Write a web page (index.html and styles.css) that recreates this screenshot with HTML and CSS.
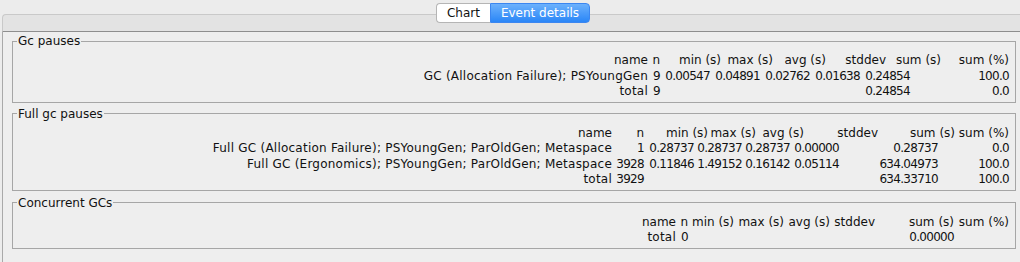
FILE: index.html
```html
<!DOCTYPE html>
<html>
<head>
    <meta charset="UTF-8">
    <title>Event details</title>
    <link rel="stylesheet" href="styles.css">
</head>
<body>
    <div class="tab-bar">
        <div class="tab-band"></div>
        <div class="segmented">
            <span class="seg">Chart</span>
            <span class="seg active">Event details</span>
        </div>
    </div>

    <div class="pane">
        <fieldset class="group gc">
            <legend>Gc pauses</legend>
            <div class="stats">
                <div class="row head">
                    <span>name</span><span>n</span><span>min (s)</span><span>max (s)</span><span>avg (s)</span><span>stddev</span><span>sum (s)</span><span>sum (%)</span>
                </div>
                <div class="row data">
                    <span>GC (Allocation Failure); PSYoungGen</span><span>9</span><span>0.00547</span><span>0.04891</span><span>0.02762</span><span>0.01638</span><span>0.24854</span><span>100.0</span>
                </div>
                <div class="row data">
                    <span>total</span><span>9</span><span></span><span></span><span></span><span></span><span>0.24854</span><span>0.0</span>
                </div>
            </div>
        </fieldset>

        <fieldset class="group full">
            <legend>Full gc pauses</legend>
            <div class="stats">
                <div class="row head">
                    <span>name</span><span>n</span><span>min (s)</span><span>max (s)</span><span>avg (s)</span><span>stddev</span><span>sum (s)</span><span>sum (%)</span>
                </div>
                <div class="row data">
                    <span>Full GC (Allocation Failure); PSYoungGen; ParOldGen; Metaspace</span><span>1</span><span>0.28737</span><span>0.28737</span><span>0.28737</span><span>0.00000</span><span>0.28737</span><span>0.0</span>
                </div>
                <div class="row data">
                    <span>Full GC (Ergonomics); PSYoungGen; ParOldGen; Metaspace</span><span>3928</span><span>0.11846</span><span>1.49152</span><span>0.16142</span><span>0.05114</span><span>634.04973</span><span>100.0</span>
                </div>
                <div class="row data">
                    <span>total</span><span>3929</span><span></span><span></span><span></span><span></span><span>634.33710</span><span>100.0</span>
                </div>
            </div>
        </fieldset>

        <fieldset class="group concurrent">
            <legend>Concurrent GCs</legend>
            <div class="stats">
                <div class="row head">
                    <span>name</span><span>n</span><span>min (s)</span><span>max (s)</span><span>avg (s)</span><span>stddev</span><span>sum (s)</span><span>sum (%)</span>
                </div>
                <div class="row data">
                    <span>total</span><span>0</span><span></span><span></span><span></span><span></span><span>0.00000</span><span></span>
                </div>
            </div>
        </fieldset>
    </div>
</body>
</html>
```

FILE: styles.css
```css
* {
    box-sizing: border-box;
    margin: 0;
    padding: 0;
}

body {
    width: 1020px;
    height: 262px;
    overflow: hidden;
    background: #ececec;
    font-family: "DejaVu Sans", sans-serif;
    font-size: 12px;
    color: #111;
}

/* tab header */
.tab-bar {
    position: relative;
    padding-top: 14px;
    padding-left: 2px;
}

.tab-band {
    height: 18px;
    background: #e3e3e3;
    border-top: 1px solid #c9c9c9;
    border-left: 1px solid #c9c9c9;
    border-bottom: 1px solid #8e8e8e;
    border-top-left-radius: 4px;
}

.segmented {
    position: absolute;
    top: 3px;
    left: 0;
    right: 0;
    display: flex;
    justify-content: center;
    padding-left: 6px;
}

.seg {
    height: 20px;
    line-height: 18px;
    font-size: 12px;
    padding: 0 10px;
    background: #fff;
    border: 1px solid #b5b5b5;
    color: #111;
}

.seg:first-child {
    border-radius: 4px 0 0 4px;
    border-right: none;
}

.seg.active {
    background: linear-gradient(#6cb1fc, #2a86f7);
    border-color: #3b86f0;
    color: #fff;
    border-radius: 0 4px 4px 0;
}

/* content */
.pane {
    margin-left: 2px;
    border-left: 1px solid #a9a9a9;
    background: #eeeeee;
    height: 230px;
    padding: 2px 4px 0 9px;
}

.group {
    border: 1px solid #a6a6a6;
    padding: 0 6px 2px 4px;
    margin-bottom: 4px;
}

.group.full {
    margin-bottom: 5px;
}

.group legend {
    font-size: 12px;
    line-height: 14px;
    padding: 0 1px;
    color: #111;
}

.stats {
    padding-top: 5px;
}

.row {
    display: grid;
    line-height: 15.5px;
    text-align: right;
    white-space: nowrap;
}

/* event names run a bit wider, numbers a bit tighter */
.data span:first-child {
    letter-spacing: 0.23px;
}

.data span + span {
    letter-spacing: -0.7px;
}

/* column widths per table (name column takes the rest) */
.gc .head   { grid-template-columns: 1fr 12px 61px 52px 53px 60px 55px 68px; }
.gc .data   { grid-template-columns: 1fr 12px 50px 50px 50px 50px 50px 99px; }

.full .head { grid-template-columns: 1fr 32px 64px 48px 48px 74px 77px 54px; }
.full .data { grid-template-columns: 1fr 32px 50px 48px 48px 49px 99px 71px; }

.concurrent .head,
.concurrent .data { grid-template-columns: 1fr 12px 46px 50px 46px 45px 79px 55px; }
```
